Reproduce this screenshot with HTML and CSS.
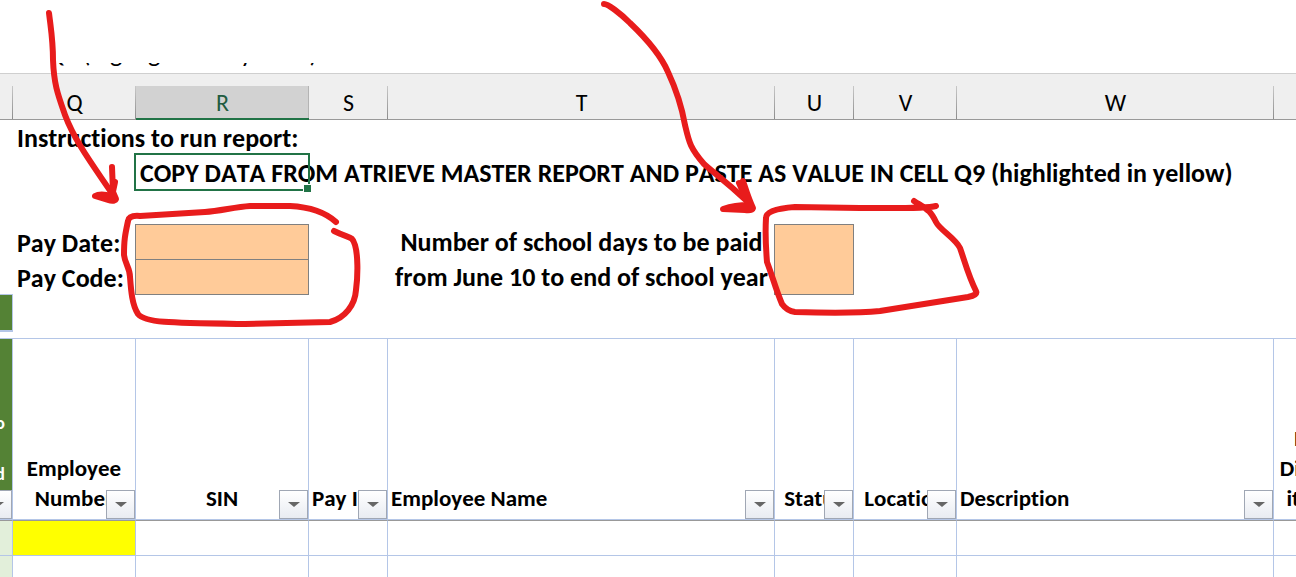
FILE: index.html
```html
<!DOCTYPE html>
<html lang="en">
<head>
  <meta charset="UTF-8">
  <title>Payroll Report</title>
  <link rel="stylesheet" href="styles.css">
</head>
<body>

  <div class="workbook">
    <div class="formula-bar">
      <div class="formula-text">Q9 (highlighted in yellow)</div>
    </div>

    <table class="sheet">
      <colgroup>
        <col class="col-p">
        <col class="col-q">
        <col class="col-r">
        <col class="col-s">
        <col class="col-t">
        <col class="col-u">
        <col class="col-v">
        <col class="col-w">
        <col>
      </colgroup>
      <thead>
        <tr class="letters">
          <th></th>
          <th>Q</th>
          <th class="active">R</th>
          <th>S</th>
          <th>T</th>
          <th>U</th>
          <th>V</th>
          <th>W</th>
          <th></th>
        </tr>
      </thead>
      <tbody>
        <tr class="info">
          <td></td>
          <td colspan="8">Instructions to run report:</td>
        </tr>
        <tr class="info">
          <td></td>
          <td></td>
          <td class="selected">COPY DATA FROM ATRIEVE MASTER REPORT AND PASTE AS VALUE IN CELL Q9 (highlighted in yellow)</td>
          <td colspan="6"></td>
        </tr>
        <tr class="info"><td colspan="9"></td></tr>
        <tr class="info">
          <td></td>
          <td><label for="pay-date">Pay Date:</label></td>
          <td class="entry"><input type="text" id="pay-date"></td>
          <td></td>
          <td class="question" rowspan="2"><label for="school-days">Number of school days to be paid<br>from June 10 to end of school year</label></td>
          <td class="entry" rowspan="2"><input type="text" id="school-days"></td>
          <td colspan="3"></td>
        </tr>
        <tr class="info">
          <td></td>
          <td><label for="pay-code">Pay Code:</label></td>
          <td class="entry"><input type="text" id="pay-code"></td>
          <td></td>
          <td colspan="3"></td>
        </tr>
        <tr class="info">
          <td class="green-top"></td>
          <td colspan="8"></td>
        </tr>
        <tr class="spacer"><td class="green-edge"></td><td colspan="8"></td></tr>
        <tr class="fields">
          <th class="green">o<br>d<button class="filter" aria-label="Filter"></button></th>
          <th>Employee<br>Number<button class="filter" aria-label="Filter"></button></th>
          <th>SIN<button class="filter" aria-label="Filter"></button></th>
          <th class="left">Pay ID<button class="filter" aria-label="Filter"></button></th>
          <th class="left">Employee Name<button class="filter" aria-label="Filter"></button></th>
          <th>Status<button class="filter" aria-label="Filter"></button></th>
          <th>Location<button class="filter" aria-label="Filter"></button></th>
          <th class="left">Description<button class="filter" aria-label="Filter"></button></th>
          <th class="last">I<br>Di<br>it</th>
        </tr>
        <tr class="data">
          <td class="pale"></td>
          <td class="yellow"></td>
          <td></td><td></td><td></td><td></td><td></td><td></td><td></td>
        </tr>
        <tr class="data">
          <td class="pale"></td>
          <td></td><td></td><td></td><td></td><td></td><td></td><td></td><td></td>
        </tr>
      </tbody>
    </table>

    <!-- hand drawn markup over the cells to fill in -->
    <svg class="ink" width="1000" height="340" viewBox="0 0 1000 340" aria-hidden="true">
      <path d="M49 13C51 30 53 40 53 60C54 85 58 95 65 115C75 142 95 168 113 195"/>
      <path d="M112 167L113 192L116 199Q114 202 108 200L95 196Q100 193 112 196L115 182"/>
      <path d="M336 222C325 212 310 207 290 206L250 206C235 207 220 211 205 212L140 216Q129 215 128 221C125 235 124 240 124 255C125 264 130 268 130 277C131 290 132 305 138 314C145 323 170 323 245 324L330 322C345 318 355 305 356 290C358 275 358 255 355 245C352 235 350 239 334 231"/>
      <path d="M604 4C608 4 620 13 630 23C650 42 662 58 668 72C675 87 682 108 685 125C689 142 690 148 704 164C715 174 722 178 748 202"/>
      <path d="M743 181C746 190 749 200 753 208Q752 211 745 210L723 209Q735 205 749 205L739 183"/>
      <path d="M936 206C925 209 880 208 860 208L795 207Q766 209 766 218C765 235 766 250 767 262C772 275 776 290 782 304Q787 311 795 312C830 313 860 313 880 311L968 297Q978 295 976 291C968 275 965 262 960 248C955 238 940 230 936 222C930 210 928 210 914 201"/>
    </svg>
  </div>

</body>
</html>
```

FILE: styles.css
```css
body {
  margin: 0;
  font-family: Calibri, Carlito, Lato, sans-serif;
  font-kerning: none;
  font-variant-ligatures: none;
  color: #000;
  background-color: #fff;
}

.workbook {
  position: relative;
  height: 100vh;
  overflow: hidden;
}

.formula-bar {
  height: 10px;
  padding: 63px 0 0 46px;
  font-size: 26px;
}

.formula-text {
  display: flex;
  align-items: flex-end;
  height: 5px;
  line-height: 30px;
  overflow: hidden;
}

/* first column is scrolled partly out of view */
.sheet {
  width: calc(100% + 24px);
  margin-left: -20px;
  table-layout: fixed;
  border-collapse: separate;
  border-spacing: 0;
}

.col-p { width: 33px; }
.col-q { width: 123px; }
.col-r { width: 173px; }
.col-s { width: 79px; }
.col-t { width: 387px; }
.col-u { width: 79px; }
.col-v { width: 103px; }
.col-w { width: 317px; }

th, td {
  box-sizing: border-box;
  padding: 0;
  white-space: nowrap;
}

.letters th {
  height: 47px;
  padding-top: 12px;
  border-top: 1px solid #cfcfcf;
  border-bottom: 1px solid #999;
  background: linear-gradient(#c8c8c8, #8c8c8c) right bottom / 1px 33px no-repeat #efefef;
  font-size: 24px;
  font-weight: normal;
  line-height: 30px;
}

.letters .active {
  padding-top: 13px;
  border-bottom: 2px solid #217346;
  background:
    linear-gradient(#b4b4b4, #b4b4b4) right bottom / 1px 32px no-repeat,
    linear-gradient(#d2d2d2, #d2d2d2) right bottom / 100% 32px no-repeat #efefef;
  color: #215c41;
}

.info td {
  height: 35px;
  padding-left: 4px;
  font-size: 26px;
  font-weight: bold;
  line-height: 34px;
}

.info .selected {
  position: relative;
}

.selected::before {
  content: "";
  position: absolute;
  top: -2px;
  right: -1px;
  bottom: -1px;
  left: -2px;
  border: 2px solid #217346;
}

.selected::after {
  content: "";
  position: absolute;
  right: -2px;
  bottom: -2px;
  width: 7px;
  height: 7px;
  border-top: 1px solid #fff;
  border-left: 1px solid #fff;
  background-color: #217346;
}

.info .question {
  padding: 0;
  text-align: center;
  line-height: 35px;
}

.info .entry {
  position: relative;
  padding: 0;
}

.entry input {
  position: absolute;
  top: -1px;
  left: -1px;
  box-sizing: border-box;
  width: calc(100% + 1px);
  height: calc(100% + 1px);
  padding: 0 4px;
  border: 1px solid #808080;
  border-radius: 0;
  background-color: #ffcb99;
  font: inherit;
}

.info .green-top {
  border-right: 1px solid #b4c6e7;
  background-color: #548235;
  box-shadow: 0 -1px #b4c6e7;
}

.spacer td {
  height: 9px;
  border-bottom: 1px solid #b4c6e7;
}

.spacer .green-edge {
  border-top: 2px solid #b4c6e7;
}

.fields th {
  position: relative;
  height: 182px;
  padding-bottom: 7px;
  border-right: 1px solid #b4c6e7;
  border-bottom: 1px solid #999;
  box-shadow: inset 0 -1px #b4c6e7;
  overflow: hidden;
  vertical-align: bottom;
  font-size: 23px;
  line-height: 30px;
}

.fields .left {
  padding-left: 3px;
  text-align: left;
}

.fields .green {
  padding-right: 7px;
  padding-bottom: 20px;
  background-color: #548235;
  color: #fff;
  font-size: 18px;
  line-height: 51px;
  text-align: right;
}

.fields .last {
  border-right: none;
  text-align: right;
}

.filter {
  position: absolute;
  right: 0;
  bottom: 1px;
  width: 29px;
  height: 29px;
  padding: 0;
  border: 1px solid #a0a7b4;
  background: linear-gradient(#fff, #e9ecf2);
}

.filter::before {
  content: "";
  display: block;
  width: 0;
  margin: auto;
  border: 6px solid transparent;
  border-top: 5px solid #666;
  border-bottom: none;
}

.data td {
  height: 35px;
  border-right: 1px solid #b4c6e7;
  border-bottom: 1px solid #b4c6e7;
}

.data .pale {
  background-color: #e2efda;
}

.data .yellow {
  background-color: #ff0;
}

.ink {
  position: absolute;
  top: 0;
  left: 0;
  fill: none;
  stroke: #e81c1c;
  stroke-width: 6;
  stroke-linecap: round;
  stroke-linejoin: round;
  pointer-events: none;
}
```
